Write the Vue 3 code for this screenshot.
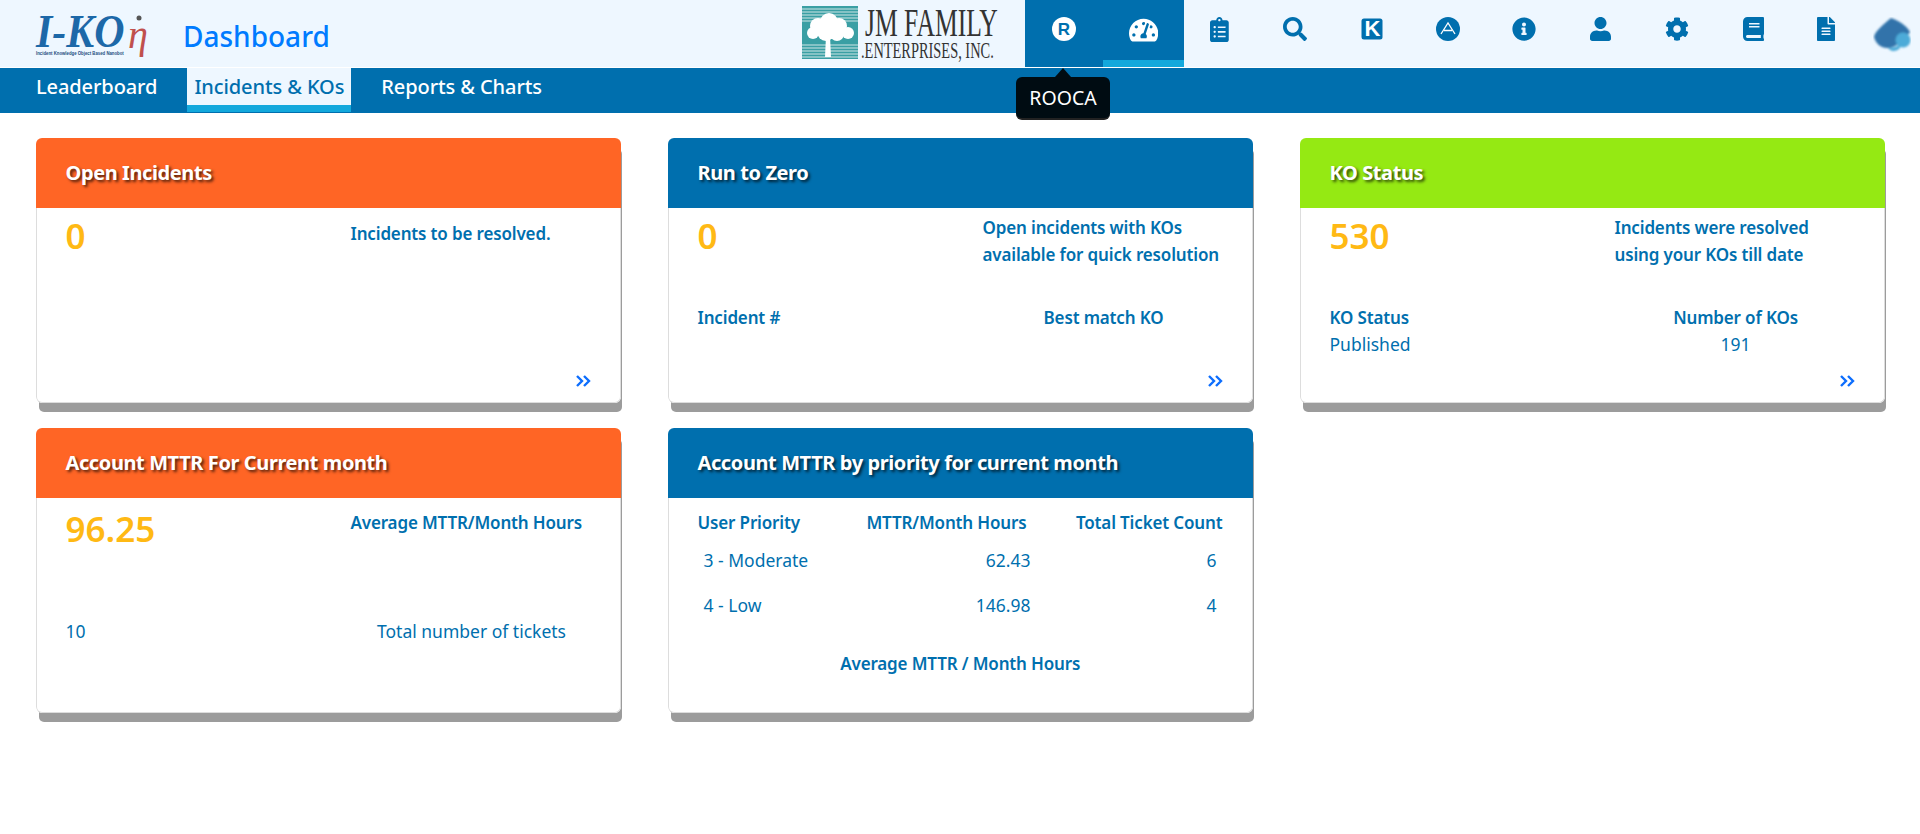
<template>
  <div class="page">
    <header class="topbar">
      <svg class="logo" viewBox="0 0 120 56" width="120" height="56">
        <text transform="translate(0 35) scale(0.91 1)" class="logo-main">I-KO</text>
        <text x="92" y="36" class="logo-eta">η</text>
        <circle cx="103" cy="6" r="2.5" fill="#555" />
        <text transform="translate(0 43) scale(0.86 1)" class="logo-tag">Incident Knowledge Object Based Nanobot</text>
      </svg>
      <div class="page-title">Dashboard</div>
      <svg class="jm-logo" viewBox="0 0 200 67" width="200" height="67">
        <rect x="0" y="6" width="56" height="53" fill="#3a9fa4" />
        <path d="M0 9h56M0 12h56M0 15h56M0 18h56M0 21h56M0 45h56M0 48h56M0 51h56M0 54h56M0 57h56" stroke="#cfe6e6" stroke-width="1" />
        <g fill="#fff">
          <circle cx="27" cy="22" r="9" />
          <circle cx="16" cy="26" r="8" />
          <circle cx="37" cy="26" r="8" />
          <circle cx="11" cy="33" r="6" />
          <circle cx="24" cy="32" r="9" />
          <circle cx="35" cy="34" r="7" />
          <circle cx="46" cy="33" r="6" />
          <path d="M24 36h4l1 21h-6z" />
        </g>
        <text transform="translate(63 36) scale(0.64 1)" class="jm-big">JM FAMILY</text>
        <text transform="translate(59 58) scale(0.6 1)" class="jm-small">.ENTERPRISES, INC.</text>
      </svg>
      <nav class="icon-nav">
        <div
          v-for="item in topIcons"
          :key="item.name"
          class="icon-cell"
          :class="[item.name, { dark: item.dark }]"
        >
          <svg v-if="item.d" :viewBox="item.box" :height="item.size" class="icon-svg">
            <path :d="item.d" />
          </svg>
          <svg v-else-if="item.name === 'rooca'" viewBox="0 0 24 24" width="24" height="24">
            <circle cx="12" cy="12" r="12" fill="#fff" />
            <text x="12" y="18" class="icon-letter" fill="#006fae">R</text>
          </svg>
          <svg v-else-if="item.name === 'ko'" viewBox="0 0 24 24" width="24" height="24">
            <rect x="1.5" y="1.5" width="21" height="21" rx="2.5" fill="#006fae" />
            <text x="12.5" y="19" class="icon-letter big" fill="#fff">K</text>
          </svg>
          <svg v-else-if="item.name === 'apex'" viewBox="0 0 24 24" width="24" height="24">
            <circle cx="12" cy="12" r="12" fill="#006fae" />
            <path d="M5 17 12 6l7 11M8 13.5h8" fill="none" stroke="#fff" stroke-width="1.3" />
          </svg>
          <svg v-else viewBox="0 0 38 36" width="38" height="36">
            <defs>
              <filter id="soft"><feGaussianBlur stdDeviation="0.8" /></filter>
            </defs>
            <g filter="url(#soft)" transform="translate(1 1)">
              <path d="M14 30c4 0 8-1 12-3v3c-3 3-8 5-12 0z" fill="#4dabd8" />
              <path d="M17 0c7 2 16 8 19 14-2 4-6 5-9 10-5 4-9 6-14 6-6 0-11-4-13-11C1 13 9 7 17 0z" fill="#3173aa" />
              <circle cx="29" cy="22" r="7.5" fill="#4dabd8" />
            </g>
          </svg>
        </div>
        <div class="tooltip">ROOCA</div>
      </nav>
    </header>

    <div class="subnav">
      <a
        v-for="tab in tabs"
        :key="tab.label"
        class="subnav-tab"
        :class="{ active: tab.active }"
      >{{ tab.label }}</a>
    </div>

    <main class="cards">
      <section class="card">
        <div class="card-head orange">Open Incidents</div>
        <div class="card-body">
          <div class="split">
            <div class="big-num">0</div>
            <div class="label single">Incidents to be resolved.</div>
          </div>
          <svg class="more" viewBox="0 0 16 12" width="16" height="12"><path d="M2 1l5 5-5 5M9 1l5 5-5 5" /></svg>
        </div>
      </section>

      <section class="card">
        <div class="card-head blue">Run to Zero</div>
        <div class="card-body">
          <div class="split">
            <div class="big-num">0</div>
            <div class="label double">Open incidents with KOs<br />available for quick resolution</div>
          </div>
          <div class="split lower">
            <div class="label">Incident #</div>
            <div class="label center">Best match KO</div>
          </div>
          <svg class="more" viewBox="0 0 16 12" width="16" height="12"><path d="M2 1l5 5-5 5M9 1l5 5-5 5" /></svg>
        </div>
      </section>

      <section class="card">
        <div class="card-head green">KO Status</div>
        <div class="card-body">
          <div class="split">
            <div class="big-num">530</div>
            <div class="label double">Incidents were resolved<br />using your KOs till date</div>
          </div>
          <div class="split lower">
            <div class="label">KO Status</div>
            <div class="label center">Number of KOs</div>
            <div class="value">Published</div>
            <div class="value center">191</div>
          </div>
          <svg class="more" viewBox="0 0 16 12" width="16" height="12"><path d="M2 1l5 5-5 5M9 1l5 5-5 5" /></svg>
        </div>
      </section>

      <section class="card tall">
        <div class="card-head orange">Account MTTR For Current month</div>
        <div class="card-body">
          <div class="split">
            <div class="big-num">96.25</div>
            <div class="label">Average MTTR/Month Hours</div>
          </div>
          <div class="split lower-far">
            <div class="value">10</div>
            <div class="value center">Total number of tickets</div>
          </div>
        </div>
      </section>

      <section class="card tall">
        <div class="card-head blue">Account MTTR by priority for current month</div>
        <div class="card-body">
          <div class="priority-table">
            <div class="label">User Priority</div>
            <div class="label right col-mid">MTTR/Month Hours</div>
            <div class="label right">Total Ticket Count</div>
            <template v-for="row in priorities" :key="row.name">
              <div class="value cell first">{{ row.name }}</div>
              <div class="value cell right">{{ row.hours }}</div>
              <div class="value cell right last">{{ row.count }}</div>
            </template>
          </div>
          <div class="label center avg">Average MTTR / Month Hours</div>
        </div>
      </section>
    </main>
  </div>
</template>

<script setup>
const tabs = [
  { label: 'Leaderboard' },
  { label: 'Incidents & KOs', active: true },
  { label: 'Reports & Charts' }
]

const priorities = [
  { name: '3 - Moderate', hours: '62.43', count: '6' },
  { name: '4 - Low', hours: '146.98', count: '4' }
]

// font-awesome style paths, the three letter icons are drawn in the template
const topIcons = [
  { name: 'rooca', dark: true },
  {
    name: 'dashboard',
    dark: true,
    box: '0 0 576 512',
    size: 26,
    d: 'M288 32C128.94 32 0 160.94 0 320c0 52.8 14.25 102.26 39.06 144.8 5.61 9.62 16.3 15.2 27.44 15.2h443c11.14 0 21.83-5.58 27.44-15.2C561.75 422.26 576 372.8 576 320c0-159.06-128.94-288-288-288zm0 64c14.71 0 26.58 10.13 30.32 23.65-1.11 2.26-2.64 4.23-3.45 6.67l-9.22 27.67c-5.13 3.49-10.97 6.01-17.64 6.01-17.67 0-32-14.33-32-32S270.33 96 288 96zM96 384c-17.67 0-32-14.33-32-32s14.33-32 32-32 32 14.33 32 32-14.33 32-32 32zm48-160c-17.67 0-32-14.33-32-32s14.33-32 32-32 32 14.33 32 32-14.33 32-32 32zm246.77-72.41l-61.33 184C343.13 347.33 352 364.54 352 384c0 11.72-3.38 22.55-8.88 32H232.88c-5.5-9.45-8.88-20.28-8.88-32 0-33.94 26.5-61.43 59.9-63.59l61.34-184.01c4.17-12.56 17.73-19.45 30.36-15.17 12.57 4.19 19.35 17.79 15.17 30.36zm14.66 57.2l15.52-46.55c3.47-1.29 7.13-2.23 11.05-2.23 17.67 0 32 14.33 32 32s-14.33 32-32 32c-11.38-.01-20.89-6.28-26.57-15.22zM480 384c-17.67 0-32-14.33-32-32s14.33-32 32-32 32 14.33 32 32-14.33 32-32 32z'
  },
  {
    name: 'clipboard',
    box: '0 0 384 512',
    size: 25,
    d: 'M336 64h-80c0-35.3-28.7-64-64-64s-64 28.7-64 64H48C21.5 64 0 85.5 0 112v352c0 26.5 21.5 48 48 48h288c26.5 0 48-21.5 48-48V112c0-26.5-21.5-48-48-48zM96 424c-13.3 0-24-10.7-24-24s10.7-24 24-24 24 10.7 24 24-10.7 24-24 24zm0-96c-13.3 0-24-10.7-24-24s10.7-24 24-24 24 10.7 24 24-10.7 24-24 24zm0-96c-13.3 0-24-10.7-24-24s10.7-24 24-24 24 10.7 24 24-10.7 24-24 24zm96-192c13.3 0 24 10.7 24 24s-10.7 24-24 24-24-10.7-24-24 10.7-24 24-24zm128 368c0 4.4-3.6 8-8 8H168c-4.4 0-8-3.6-8-8v-16c0-4.4 3.6-8 8-8h144c4.4 0 8 3.6 8 8v16zm0-96c0 4.4-3.6 8-8 8H168c-4.4 0-8-3.6-8-8v-16c0-4.4 3.6-8 8-8h144c4.4 0 8 3.6 8 8v16zm0-96c0 4.4-3.6 8-8 8H168c-4.4 0-8-3.6-8-8v-16c0-4.4 3.6-8 8-8h144c4.4 0 8 3.6 8 8v16z'
  },
  {
    name: 'search',
    box: '0 0 512 512',
    size: 24,
    d: 'M505 442.7L405.3 343c-4.5-4.5-10.6-7-17-7H372c27.6-35.3 44-79.7 44-128C416 93.1 322.9 0 208 0S0 93.1 0 208s93.1 208 208 208c48.3 0 92.7-16.4 128-44v16.3c0 6.4 2.5 12.5 7 17l99.7 99.7c9.4 9.4 24.6 9.4 33.9 0l28.3-28.3c9.4-9.4 9.4-24.6.1-34zM208 336c-70.7 0-128-57.2-128-128 0-70.7 57.2-128 128-128 70.7 0 128 57.2 128 128 0 70.7-57.2 128-128 128z'
  },
  { name: 'ko' },
  { name: 'apex' },
  {
    name: 'info',
    box: '0 0 512 512',
    size: 24,
    d: 'M256 8C119 8 8 119.1 8 256c0 137 111 248 248 248s248-111 248-248C504 119.1 393 8 256 8zm0 110c23.2 0 42 18.8 42 42s-18.8 42-42 42-42-18.8-42-42 18.8-42 42-42zm56 254c0 6.6-5.4 12-12 12h-88c-6.6 0-12-5.4-12-12v-24c0-6.6 5.4-12 12-12h12v-64h-12c-6.6 0-12-5.4-12-12v-24c0-6.6 5.4-12 12-12h64c6.6 0 12 5.4 12 12v100h12c6.6 0 12 5.4 12 12v24z'
  },
  {
    name: 'user',
    box: '0 0 448 512',
    size: 24,
    d: 'M224 256c70.7 0 128-57.3 128-128S294.7 0 224 0 96 57.3 96 128s57.3 128 128 128zm89.6 32h-16.7c-22.2 10.2-46.9 16-72.9 16s-50.6-5.8-72.9-16h-16.7C60.2 288 0 348.2 0 422.4V464c0 26.5 21.5 48 48 48h352c26.5 0 48-21.5 48-48v-41.6c0-74.2-60.2-134.4-134.4-134.4z'
  },
  {
    name: 'settings',
    box: '0 0 512 512',
    size: 24,
    d: 'M487.4 315.7l-42.6-24.6c4.3-23.2 4.3-47 0-70.2l42.6-24.6c4.9-2.8 7.1-8.6 5.5-14-11.1-35.6-30-67.8-54.7-94.6-3.8-4.1-10-5.1-14.8-2.3L380.8 110c-17.9-15.4-38.5-27.3-60.8-35.1V25.8c0-5.6-3.9-10.5-9.4-11.7-36.7-8.2-74.3-7.8-109.2 0-5.5 1.2-9.4 6.1-9.4 11.7V75c-22.2 7.9-42.8 19.8-60.8 35.1L88.7 85.5c-4.9-2.8-11-1.9-14.8 2.3-24.7 26.7-43.6 58.9-54.7 94.6-1.7 5.4.6 11.2 5.5 14L67.3 221c-4.3 23.2-4.3 47 0 70.2l-42.6 24.6c-4.9 2.8-7.1 8.6-5.5 14 11.1 35.6 30 67.8 54.7 94.6 3.8 4.1 10 5.1 14.8 2.3l42.6-24.6c17.9 15.4 38.5 27.3 60.8 35.1v49.2c0 5.6 3.9 10.5 9.4 11.7 36.7 8.2 74.3 7.8 109.2 0 5.5-1.2 9.4-6.1 9.4-11.7v-49.2c22.2-7.9 42.8-19.8 60.8-35.1l42.6 24.6c4.9 2.8 11 1.9 14.8-2.3 24.7-26.7 43.6-58.9 54.7-94.6 1.5-5.5-.7-11.3-5.6-14.1zM256 336c-44.1 0-80-35.9-80-80s35.9-80 80-80 80 35.9 80 80-35.9 80-80 80z'
  },
  {
    name: 'book',
    box: '0 0 448 512',
    size: 24,
    d: 'M448 360V24c0-13.3-10.7-24-24-24H96C43 0 0 43 0 96v320c0 53 43 96 96 96h328c13.3 0 24-10.7 24-24v-16c0-7.5-3.5-14.3-8.9-18.7-4.2-15.4-4.2-59.3 0-74.7 5.4-4.3 8.9-11.1 8.9-18.6zM128 134c0-3.3 2.7-6 6-6h212c3.3 0 6 2.7 6 6v20c0 3.3-2.7 6-6 6H134c-3.3 0-6-2.7-6-6v-20zm0 64c0-3.3 2.7-6 6-6h212c3.3 0 6 2.7 6 6v20c0 3.3-2.7 6-6 6H134c-3.3 0-6-2.7-6-6v-20zm253.4 250H96c-17.7 0-32-14.3-32-32 0-17.6 14.4-32 32-32h285.4c-1.9 17.1-1.9 46.9 0 64z'
  },
  {
    name: 'doc',
    box: '0 0 384 512',
    size: 24,
    d: 'M224 136V0H24C10.7 0 0 10.7 0 24v464c0 13.3 10.7 24 24 24h336c13.3 0 24-10.7 24-24V160H248c-13.2 0-24-10.8-24-24zm64 236c0 6.6-5.4 12-12 12H108c-6.6 0-12-5.4-12-12v-8c0-6.6 5.4-12 12-12h168c6.6 0 12 5.4 12 12v8zm0-64c0 6.6-5.4 12-12 12H108c-6.6 0-12-5.4-12-12v-8c0-6.6 5.4-12 12-12h168c6.6 0 12 5.4 12 12v8zm0-72v8c0 6.6-5.4 12-12 12H108c-6.6 0-12-5.4-12-12v-8c0-6.6 5.4-12 12-12h168c6.6 0 12 5.4 12 12zm96-114.1v6.1H256V0h6.1c6.4 0 12.5 2.5 17 7l97.9 98c4.5 4.5 7 10.6 7 16.9z'
  },
  { name: 'avatar' }
]
</script>

<style>
html,
body {
  margin: 0;
  background: #fff;
}
</style>

<style scoped>
.page {
  font-family: "Noto Sans", "Open Sans", sans-serif;
  color: #006fae;
}

.topbar {
  height: 67px;
  display: flex;
  background: #eef7ff;
  padding-left: 36px;
  border-bottom: 1px solid #fff;
}

.logo {
  flex-shrink: 0;
  margin-top: 12px;
  overflow: visible;
}

.logo-main {
  font-family: "Liberation Serif", serif;
  font-style: italic;
  font-weight: 700;
  font-size: 46px;
  fill: #1c68a8;
}

.logo-eta {
  font-family: "Liberation Serif", serif;
  font-style: italic;
  font-size: 40px;
  fill: #c0504d;
}

.logo-tag {
  font-family: "Liberation Sans", sans-serif;
  font-size: 5px;
  font-weight: 700;
  fill: #1c4e80;
}

.page-title {
  margin-left: 27px;
  font-size: 28px;
  line-height: 72px;
  color: #007bff;
  font-weight: 500;
}

.jm-logo {
  margin-left: auto;
  margin-right: 23px;
  flex-shrink: 0;
  overflow: visible;
}

.jm-big {
  font-family: "Liberation Serif", serif;
  font-size: 40px;
  fill: #333;
}

.jm-small {
  font-family: "Liberation Serif", serif;
  font-size: 24px;
  fill: #333;
}

.icon-nav {
  position: relative;
  display: flex;
  height: 67px;
}

.icon-cell {
  width: 76.3px;
  display: flex;
  justify-content: center;
  padding: 17px 6px 0 0;
  box-sizing: border-box;
  fill: #006fae;
}

.icon-cell.dark {
  padding-right: 0;
  background: #006fae;
  fill: #fff;
}

.icon-cell.rooca {
  width: 78px;
}

.icon-cell.dashboard {
  width: 81px;
  border-bottom: 7px solid #13a8dc;
}

.icon-cell.doc {
  width: 70px;
}

.icon-cell.avatar {
  width: 55.6px;
  padding-right: 0;
}

.icon-letter {
  font-family: "Liberation Sans", sans-serif;
  font-weight: 700;
  font-size: 17px;
  text-anchor: middle;
}

.icon-letter.big {
  font-size: 22px;
}

.tooltip {
  position: absolute;
  left: -9px;
  top: 77px;
  width: 94px;
  height: 41px;
  background: #000c12;
  border-radius: 6px;
  border-bottom: 2px solid #222;
  color: #fff;
  font-size: 19.5px;
  line-height: 41px;
  text-align: center;
}

.tooltip::before {
  content: "";
  position: absolute;
  left: 39px;
  top: -9px;
  border-left: 8px solid transparent;
  border-right: 8px solid transparent;
  border-bottom: 9px solid #000c12;
}

.subnav {
  height: 45px;
  display: flex;
  background: #006fae;
  padding-left: 36px;
}

.subnav-tab {
  color: #fff;
  font-size: 20px;
  font-weight: 500;
  line-height: 38px;
  letter-spacing: -0.1px;
  margin-right: 37px;
}

.subnav-tab.active {
  height: 37px;
  padding: 0 7px;
  margin-left: -7px;
  margin-right: 30px;
  background: #eef7ff;
  color: #006fae;
  border-bottom: 7px solid #13a8dc;
}

.cards {
  display: grid;
  grid-template-columns: repeat(3, 585.5px);
  column-gap: 46.5px;
  row-gap: 25px;
  padding: 25px 35.5px 40px;
  align-items: start;
}

.card {
  height: 265px;
  background: #fff;
  border-radius: 6px;
  box-shadow: 2px 10px 0 -1px #9c9c9c;
  overflow: hidden;
}

.card.tall {
  height: 285px;
}

.card-head {
  height: 70px;
  padding-left: 30px;
  font-size: 20px;
  font-weight: 700;
  line-height: 70px;
  letter-spacing: -0.4px;
  color: #fff;
  text-shadow: 2px 2px 3px rgba(0, 0, 0, 0.7);
}

.orange {
  background: #ff6525;
}

.blue {
  background: #006fae;
}

.green {
  background: #95e913;
}

.card-body {
  position: relative;
  height: 195px;
  padding: 10px 29px 0;
  box-sizing: border-box;
  border: 1px solid #ddd;
  border-top: 0;
  border-radius: 0 0 6px 6px;
  background: #fff;
}

.tall .card-body {
  height: 215px;
  padding-top: 11px;
}

.split {
  display: grid;
  grid-template-columns: 285px 242px;
  align-items: start;
}

.split.lower {
  position: absolute;
  left: 29px;
  top: 96px;
}

.split.lower-far {
  margin-top: 71px;
}

.big-num {
  font-size: 35px;
  font-weight: 600;
  line-height: 36px;
  color: #ffb914;
}

.tall .big-num {
  margin-top: 2px;
}

.label {
  font-size: 17px;
  font-weight: 600;
  line-height: 27px;
  letter-spacing: -0.15px;
}

.label.single {
  margin-top: 2px;
}

.label.double {
  margin-top: -4px;
}

.value {
  font-size: 17.5px;
  line-height: 27px;
}

.center {
  text-align: center;
}

.right {
  text-align: right;
}

.more {
  position: absolute;
  right: 29px;
  bottom: 15px;
  fill: none;
  stroke: #0d6efd;
  stroke-width: 2.4;
}

.priority-table {
  display: grid;
  grid-template-columns: 150px 183px 192px;
}

.col-mid {
  padding-right: 4px;
}

.cell {
  height: 45px;
  line-height: 49px;
}

.cell.first {
  padding-left: 6px;
}

.cell.last {
  padding-right: 6px;
}

.avg {
  margin-top: 24px;
}
</style>
